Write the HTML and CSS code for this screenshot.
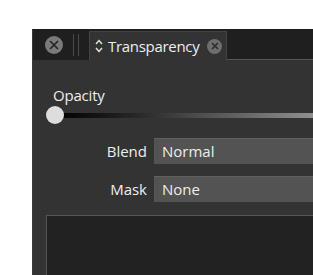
FILE: index.html
```html
<!DOCTYPE html>
<html lang="en">
<head>
  <meta charset="UTF-8">
  <title>Transparency</title>
  <link rel="stylesheet" href="styles.css">
</head>
<body>
  <div class="panel">
    <!-- Tab bar -->
    <div class="tabbar">
      <span class="close-btn big">
        <svg width="10" height="10" viewBox="0 0 10 10"><path d="M1 1L9 9M9 1L1 9" stroke="#222" stroke-width="1.6"/></svg>
      </span>
      <span class="grip"></span>
      <div class="tab">
        <svg class="chev" width="8" height="14" viewBox="0 0 8 14"><path d="M1 5L4 1.5L7 5M1 9L4 12.5L7 9" fill="none" stroke="#e6e6e6" stroke-width="1.4"/></svg>
        <span class="tab-title">Transparency</span>
        <span class="close-btn small">
          <svg width="8" height="8" viewBox="0 0 8 8"><path d="M1 1L7 7M7 1L1 7" stroke="#2a2a2a" stroke-width="1.5"/></svg>
        </span>
      </div>
      <div class="tab-rest"></div>
    </div>

    <!-- Body -->
    <div class="body">
      <div class="label">Opacity</div>
      <div class="slider">
        <div class="track"></div>
        <div class="knob"></div>
      </div>
      <div class="row">
        <span class="row-label">Blend</span>
        <div class="select">Normal</div>
      </div>
      <div class="row">
        <span class="row-label">Mask</span>
        <div class="select">None</div>
      </div>
      <div class="preview"></div>
    </div>
  </div>
</body>
</html>
```

FILE: styles.css
```css
body {
  margin: 0;
  padding: 0;
  background-color: #fff;
  font-family: 'Open Sans', 'Noto Sans', sans-serif;
  overflow: hidden;
}
.panel {
  margin: 29px 0 0 32px;
  height: 246px;
  background-color: #333;
  border-left: 1px solid #3a3a3a;
  display: flex;
  flex-direction: column;
}
.tabbar {
  height: 31px;
  background-color: #1f1f1f;
  display: flex;
  align-items: stretch;
}
.close-btn {
  display: flex;
  align-items: center;
  justify-content: center;
  border-radius: 50%;
  background-color: #7a7a7a;
  align-self: center;
}
.close-btn.big {
  width: 18px;
  height: 18px;
  margin-left: 12px;
}
.close-btn.small {
  width: 15px;
  height: 15px;
  margin-left: 8px;
  background-color: #6e6e6e;
}
.grip {
  width: 4px;
  height: 22px;
  margin-left: 10px;
  align-self: center;
  border-left: 1px solid #4a4a4a;
  border-right: 1px solid #4a4a4a;
}
.tab {
  margin-left: 10px;
  margin-top: 2px;
  width: 138px;
  box-sizing: border-box;
  background-color: #333;
  border: 1px solid #444;
  border-bottom: none;
  display: flex;
  align-items: center;
  padding-left: 5px;
  color: #eee;
}
.chev {
  margin-right: 5px;
}
.tab-title {
  font-size: 15px;
  letter-spacing: -0.3px;
}
.tab-rest {
  flex: 1;
  border-bottom: 1px solid #555;
}
.body {
  flex: 1;
  padding: 0 0 0 13px;
  color: #eee;
  display: flex;
  flex-direction: column;
}
.label {
  font-size: 15px;
  margin-top: 26px;
  margin-left: 7px;
  line-height: 18px;
  letter-spacing: -0.2px;
}
.slider {
  position: relative;
  height: 20px;
  margin-top: 1px;
}
.track {
  margin: 8px 0 0 9px;
  height: 5px;
  background: linear-gradient(to right, #000, #1e1e1e 25%, #8f8f8f 100%);
}
.knob {
  position: absolute;
  left: 0;
  top: 1px;
  width: 18px;
  height: 18px;
  border-radius: 50%;
  background-color: #ddd;
}
.row {
  display: flex;
  align-items: center;
  margin-top: 13px;
  height: 26px;
}
.row + .row {
  margin-top: 12px;
}
.row-label {
  width: 101px;
  text-align: right;
  font-size: 15px;
  margin-right: 7px;
}
.select {
  flex: 1;
  height: 26px;
  line-height: 25px;
  background-color: #535353;
  border-top: 1px solid #606060;
  box-sizing: border-box;
  padding-left: 8px;
  font-size: 15px;
}
.preview {
  flex: 1;
  margin-top: 13px;
  background-color: #222;
  border-top: 1px solid #555;
  border-left: 1px solid #555;
}
```
